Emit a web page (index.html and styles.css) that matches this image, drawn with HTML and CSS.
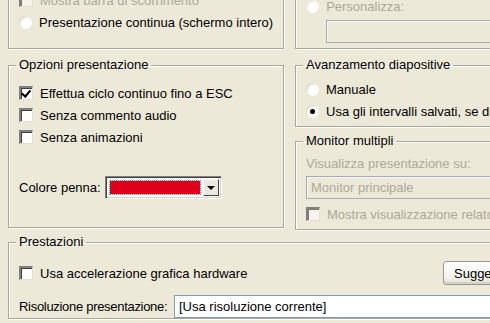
FILE: index.html
```html
<!DOCTYPE html>
<html lang="it">
<head>
    <meta charset="UTF-8">
    <title>Imposta presentazione</title>
    <link rel="stylesheet" href="styles.css">
</head>
<body>
    <div class="dialog">
        <div class="row">
            <fieldset class="group col-left show-type">
                <div class="opt disabled"><span class="check"></span>Mostra barra di scorrimento</div>
                <div class="opt"><span class="radio"></span>Presentazione continua (schermo intero)</div>
            </fieldset>
            <fieldset class="group col-right slides">
                <div class="opt disabled"><span class="radio"></span>Personalizza:</div>
                <div class="field disabled indent"></div>
            </fieldset>
        </div>

        <div class="row row-mid">
            <fieldset class="group col-left options">
                <legend>Opzioni presentazione</legend>
                <div class="opt"><span class="check checked"></span>Effettua ciclo continuo fino a ESC</div>
                <div class="opt"><span class="check"></span>Senza commento audio</div>
                <div class="opt"><span class="check"></span>Senza animazioni</div>
                <div class="pen">
                    <span class="pen-label">Colore penna:</span>
                    <div class="combo">
                        <span class="swatch"></span>
                        <span class="drop"></span>
                    </div>
                </div>
            </fieldset>
            <div class="col-right stack">
                <fieldset class="group advance">
                    <legend>Avanzamento diapositive</legend>
                    <div class="opt"><span class="radio"></span>Manuale</div>
                    <div class="opt"><span class="radio on"></span>Usa gli intervalli salvati, se disponibili</div>
                </fieldset>
                <fieldset class="group monitors">
                    <legend>Monitor multipli</legend>
                    <div class="caption disabled">Visualizza presentazione su:</div>
                    <div class="field disabled">Monitor principale</div>
                    <div class="opt disabled"><span class="check"></span>Mostra visualizzazione relatore</div>
                </fieldset>
            </div>
        </div>

        <fieldset class="group perf">
            <legend>Prestazioni</legend>
            <div class="perf-row">
                <div class="opt"><span class="check"></span>Usa accelerazione grafica hardware</div>
                <button class="btn">Suggerimenti</button>
            </div>
            <div class="res-row">
                <span class="res-label">Risoluzione presentazione:</span>
                <div class="field">[Usa risoluzione corrente]</div>
            </div>
        </fieldset>
    </div>
</body>
</html>
```

FILE: styles.css
```css
* {
    margin: 0;
    padding: 0;
    box-sizing: border-box;
}

body {
    width: 490px;
    height: 323px;
    overflow: hidden;
    background-color: #ece9d8;
    font-family: "Liberation Sans", Arial, sans-serif;
    font-size: 13px;
    color: #000;
}

.dialog {
    width: 640px;
    margin-top: -20px;
    padding-left: 8px;
}

.row {
    display: flex;
    align-items: flex-start;
    gap: 11px;
}
.row-mid {
    margin-top: 8px;
}

.col-left {
    width: 276px;
    flex: none;
}
.col-right {
    flex: 1;
}

.group {
    border: 1px solid #aca899;
    box-shadow: inset 1px 1px 0 #fff, 1px 1px 0 #fff;
    padding: 0 10px;
}
.group legend {
    line-height: 16px;
    padding: 0 3px;
    margin-left: -3px;
}

.opt {
    display: flex;
    align-items: center;
    height: 22px;
    white-space: nowrap;
}
.disabled {
    color: #aca899;
}

/* checkbox, classic sunken */
.check {
    width: 14px;
    height: 14px;
    margin-right: 7px;
    background-color: #fff;
    border-top: 2px solid #808080;
    border-left: 2px solid #808080;
    border-right: 1px solid #e4e2d6;
    border-bottom: 1px solid #e4e2d6;
    box-shadow: inset 1px 1px 0 #404040;
    flex: none;
    position: relative;
}
.disabled .check {
    background-color: #f4f3ee;
    box-shadow: inset 1px 1px 0 #7a7a72;
}
.check.checked::after {
    content: "";
    position: absolute;
    left: 2px;
    top: 0px;
    width: 4px;
    height: 7px;
    border-right: 2px solid #000;
    border-bottom: 2px solid #000;
    transform: rotate(40deg);
}

.radio {
    width: 13px;
    height: 13px;
    margin-right: 7px;
    border-radius: 50%;
    background: radial-gradient(circle at 65% 65%, #fff 45%, #e2e0d4 70%, #8d8b80 100%);
    flex: none;
    position: relative;
}
.disabled .radio {
    background: radial-gradient(circle at 65% 65%, #fff 45%, #ecebe3 70%, #c4c2b4 100%);
}
.radio.on::after {
    content: "";
    position: absolute;
    left: 4px;
    top: 4px;
    width: 5px;
    height: 5px;
    border-radius: 50%;
    background-color: #000;
}

.field {
    height: 23px;
    line-height: 21px;
    padding: 0 4px;
    border: 1px solid #7f9db9;
    background-color: #fff;
    white-space: nowrap;
    overflow: hidden;
}
.field.disabled {
    border-color: #a5acb5;
    background-color: #ece9d8;
    box-shadow: inset 1px 1px 0 #f7f6f0;
}

/* top row */
.show-type {
    height: 69px;
    padding-top: 8px;
}
.slides {
    height: 69px;
    padding-top: 14px;
}
.slides .indent {
    margin: 3px 0 0 20px;
}

/* options */
.options {
    padding-top: 9px;
    padding-bottom: 28px;
}
.pen {
    display: flex;
    align-items: center;
    margin-top: 28px;
}
.pen-label {
    width: 86px;
    flex: none;
}
.combo {
    display: flex;
    width: 117px;
    height: 23px;
    padding: 3px 2px 3px 3px;
    background-color: #fff;
    border-top: 1px solid #808080;
    border-left: 1px solid #808080;
    border-right: 1px solid #fff;
    border-bottom: 1px solid #fff;
    box-shadow: inset 1px 1px 0 #404040, inset -1px -1px 0 #d4d0c8;
}
.swatch {
    flex: 1;
    background-color: #df0019;
    outline: 1px dotted #888;
    margin: 1px 3px 1px 1px;
}
.drop {
    width: 16px;
    flex: none;
    margin-top: -1px;
    margin-bottom: -1px;
    background-color: #ece9d8;
    border-top: 1px solid #fff;
    border-left: 1px solid #fff;
    border-right: 1px solid #404040;
    border-bottom: 1px solid #404040;
    position: relative;
}
.drop::after {
    content: "";
    position: absolute;
    left: 3px;
    top: 6px;
    border-left: 4px solid transparent;
    border-right: 4px solid transparent;
    border-top: 4px solid #000;
}

/* right column */
.stack {
    display: flex;
    flex-direction: column;
    gap: 6px;
}
.advance {
    padding-top: 5px;
    padding-bottom: 4px;
}
.monitors {
    padding-top: 7px;
    padding-bottom: 4px;
}
.caption {
    line-height: 16px;
}
.monitors .field {
    margin: 4px 0;
}

/* performance */
.perf {
    width: 640px;
    margin-top: 4px;
    padding-top: 11px;
}
.perf-row {
    display: flex;
    align-items: center;
    justify-content: space-between;
}
.perf-row .opt {
    height: 24px;
}
.btn {
    width: 90px;
    height: 24px;
    margin-right: 104px;
    font: inherit;
    text-align: left;
    padding-left: 10px;
    border: 1px solid #9a9890;
    border-radius: 3px;
    background: linear-gradient(#fff, #f3f2ec 70%, #dedbcf);
    box-shadow: inset 0 -2px 0 #d6d3c6;
}
.res-row {
    display: flex;
    align-items: center;
    margin-top: 10px;
}
.res-label {
    width: 155px;
    flex: none;
    white-space: nowrap;
    letter-spacing: -0.3px;
}
.res-row .field {
    width: 360px;
}
```
